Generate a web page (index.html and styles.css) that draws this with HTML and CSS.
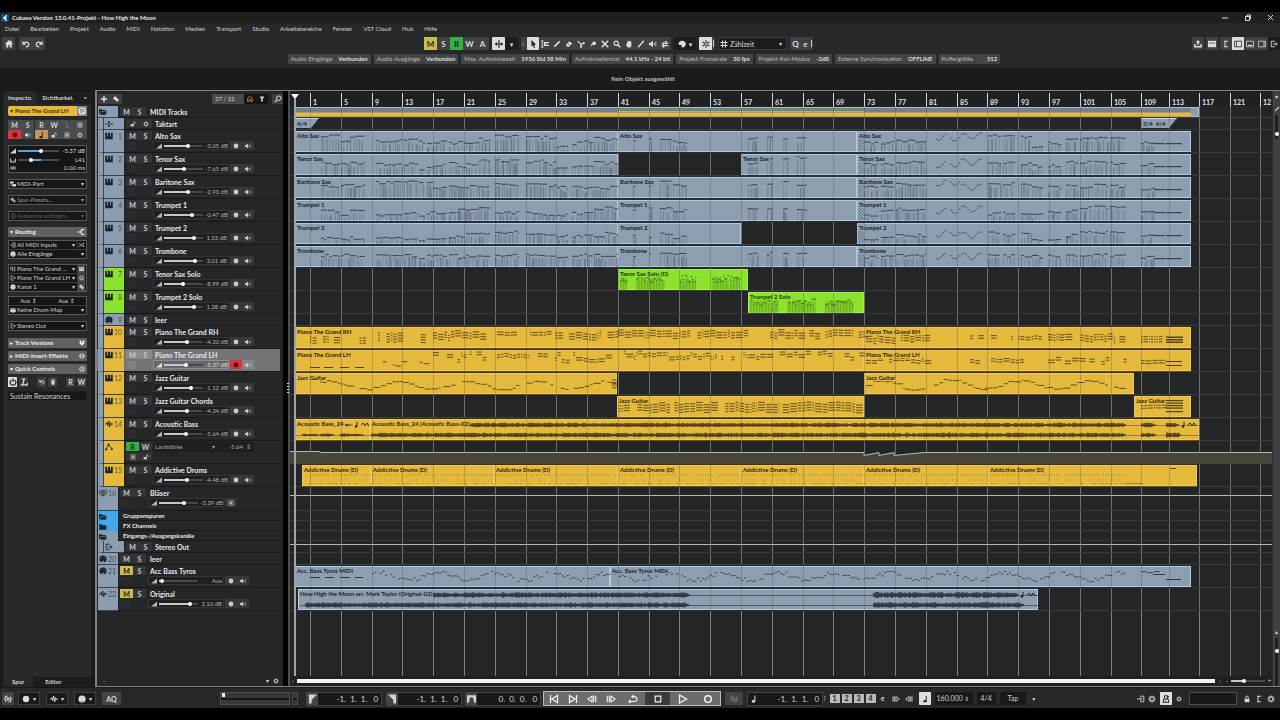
FILE: index.html
```html
<!DOCTYPE html>
<html lang="de">
<head>
<meta charset="utf-8">
<title>Cubase Version 13.0.41-Projekt - How High the Moon</title>
<link rel="stylesheet" href="styles.css">
</head>
<body>
<svg class="sprite" aria-hidden="true">
  <symbol id="i-logo" viewBox="0 0 8 8"><rect width="8" height="8" fill="#15506e"/><path d="M5.6 1.2 2.6 4l3 2.8M5.5 2.7 4.2 4l1.3 1.3" fill="none" stroke="#d8f2ff" stroke-width="1.1"/></symbol>
  <symbol id="i-home" viewBox="0 0 10 10"><path d="M5 0 0 5h1.500v4.500h2.600V6.300h1.800v3.200h2.600V5H10L8.500 3.400V1H7v1z" fill="currentColor"/></symbol>
  <symbol id="i-undo" viewBox="0 0 10 10"><path d="M2.500 4.200C5 1.500 9 3 8.400 6 8 8 6 8.600 4.600 8.400" fill="none" stroke="currentColor" stroke-width="1.600"/><path d="M.5 1v5h5z" fill="currentColor"/></symbol>
  <symbol id="i-redo" viewBox="0 0 10 10"><path d="M7.500 4.200C5 1.500 1 3 1.600 6 2 8 4 8.600 5.400 8.400" fill="none" stroke="currentColor" stroke-width="1.600"/><path d="M9.500 1v5h-5z" fill="currentColor"/></symbol>
  <symbol id="i-scroll" viewBox="0 0 10 10"><path d="M5 0v10M0 5h10" stroke="currentColor" stroke-width="1.400"/><path d="M2.500 2.500 0 5l2.500 2.500zM7.500 2.500 10 5 7.500 7.500z" fill="currentColor"/></symbol>
  <symbol id="i-arrow" viewBox="0 0 10 10"><path d="M3 0v8l2-1.500L6 10l1.500-.6L6.400 6H9z" fill="currentColor"/></symbol>
  <symbol id="i-range" viewBox="0 0 10 10"><path d="M0 1h3M1.500 1v8M0 9h3" fill="none" stroke="currentColor" stroke-width="1.200"/><path d="M3.500 2.500H10v1.500H6v2h4v1.500H3.500z" fill="currentColor"/></symbol>
  <symbol id="i-pen" viewBox="0 0 10 10"><path d="M1 9 2 6.500 7.500 1 9 2.500 3.500 8z" fill="currentColor"/></symbol>
  <symbol id="i-eraser" viewBox="0 0 10 10"><path d="M1 6 5.500 1.500 9 4.500 5 8.500H3z" fill="currentColor"/><path d="m3.300 4 3 3" stroke="#3c3d3f"/></symbol>
  <symbol id="i-scissors" viewBox="0 0 10 10"><path d="m1 1.500 4 4L9 4M5 5.500V9" stroke="currentColor" stroke-width="1.500" fill="none"/><circle cx="5" cy="8.300" r="1.400" fill="currentColor"/><circle cx="8.300" cy="4" r="1.400" fill="currentColor"/></symbol>
  <symbol id="i-glue" viewBox="0 0 10 10"><path d="M1 9 3 5l3-3.500 3 1.500-1 3-2 .5L4 6z" fill="currentColor"/></symbol>
  <symbol id="i-x" viewBox="0 0 10 10"><path d="m1 1 8 8M9 1 1 9" stroke="currentColor" stroke-width="2"/></symbol>
  <symbol id="i-lens" viewBox="0 0 10 10"><circle cx="4" cy="4" r="2.600" fill="none" stroke="currentColor" stroke-width="1.500"/><path d="m6 6 3 3" stroke="currentColor" stroke-width="2"/></symbol>
  <symbol id="i-hand" viewBox="0 0 10 10"><path d="M2 4h1V1.500h1.200V1h1.200v.5h1.200V2H8v5L7 9.500H3.500L1.500 6.500z" fill="currentColor"/></symbol>
  <symbol id="i-line" viewBox="0 0 10 10"><path d="M1.500 9 8.500 1" stroke="currentColor" stroke-width="1.700"/></symbol>
  <symbol id="i-speaker" viewBox="0 0 10 10"><path d="M0 3.500h2L5 1v8L2 6.500H0z" fill="currentColor"/><path d="M6.500 3.500v3M8.500 2.200v5.600" stroke="currentColor" stroke-width="1"/></symbol>
  <symbol id="i-warp" viewBox="0 0 10 10"><path d="M1 4h7M5 1l3 3-2 1M9 7H2M4 5 1.500 7 4 9.500" stroke="currentColor" stroke-width="1.500" fill="none"/></symbol>
  <symbol id="i-palette" viewBox="0 0 10 10"><path d="M5 .8C1.500.8 0 4 1 5.500c1 1.300 2 .2 3 .8.900.7-.2 2 1 3C8.500 9.300 10.500 6 9.500 3.500 8.500 1.600 7 .8 5 .8z" fill="currentColor"/></symbol>
  <symbol id="i-snap" viewBox="0 0 10 10"><path d="M5 0v10M.7 2.500l8.600 5M9.300 2.500l-8.600 5" stroke="currentColor" stroke-width="1.300" stroke-dasharray="3.800 2.200"/></symbol>
  <symbol id="i-grid" viewBox="0 0 10 10"><path d="M3.200.5v9M6.800.5v9M.5 3.200h9M.5 6.800h9" stroke="currentColor" stroke-width="1.300"/></symbol>
  <symbol id="i-export" viewBox="0 0 10 10"><path d="M5 0 2 3.200h2V6h2V3.200h2z" fill="currentColor"/><path d="M1 5v3.500h8V5" fill="none" stroke="currentColor" stroke-width="1.800"/></symbol>
  <symbol id="i-media" viewBox="0 0 10 10"><path d="M0 1h10v8H0z" fill="currentColor"/><path d="M2 5V3M4 5V3.500M6 5V2.500M8 5V3" stroke="#3c3d3f" stroke-width=".9"/></symbol>
  <symbol id="i-lay0" viewBox="0 0 10 10"><path d="M2.500 1.500h5M2.500 8.500h5M3.800 1v8" stroke="currentColor" stroke-width="1.300"/></symbol>
  <symbol id="i-lay1" viewBox="0 0 10 10"><path d="M.5 1.500h9v7h-9zM3 1.500v7" fill="none" stroke="currentColor"/></symbol>
  <symbol id="i-lay2" viewBox="0 0 10 10"><path d="M.5 1.500h9v7h-9z" fill="none" stroke="currentColor"/><path d="M2 6h6v1.500H2z" fill="currentColor"/></symbol>
  <symbol id="i-lay3" viewBox="0 0 10 10"><path d="M.5 1.500h9v7h-9zM7.500 2v6" fill="none" stroke="currentColor"/></symbol>
  <symbol id="i-out" viewBox="0 0 10 10"><path d="M6 1.500H1.500v7H6M3.500 5H9M7 3l2 2-2 2" fill="none" stroke="currentColor" stroke-width="1.100"/></symbol>
  <symbol id="i-in" viewBox="0 0 10 10"><path d="M4 1.500h4.500v7H4M0 5h5.500M4 3l2 2-2 2" fill="none" stroke="currentColor" stroke-width="1.200"/></symbol>
  <symbol id="i-disc" viewBox="0 0 10 10"><circle cx="5" cy="5" r="3.800" fill="none" stroke="currentColor" stroke-width="1.400"/><path d="M3 6 7 3.500M5 7h3" stroke="currentColor"/></symbol>
  <symbol id="i-note" viewBox="0 0 10 10"><path d="M6.500 1v6.500" stroke="currentColor" stroke-width="1.200"/><ellipse cx="5" cy="7.700" rx="2" ry="1.500" fill="currentColor"/></symbol>
  <symbol id="i-lock" viewBox="0 0 10 10"><path d="M1 5h5.500v4H1z" fill="currentColor"/><path d="M5.500 5V3.200C5.500 1.200 9 1.200 9 3.200V5" fill="none" stroke="currentColor" stroke-width="1.100"/></symbol>
  <symbol id="i-padlock" viewBox="0 0 10 10"><path d="M2 4.500h6V9H2z" fill="currentColor"/><path d="M3.300 4.500V3c0-2.300 3.400-2.300 3.400 0v1.500" fill="none" stroke="currentColor" stroke-width="1.200"/></symbol>
  <symbol id="i-box" viewBox="0 0 10 10"><path d="M1.500 1.500h7v7h-7z" fill="none" stroke="currentColor" stroke-width="1.100"/><path d="M3.500 3.500h3v3h-3z" fill="currentColor"/></symbol>
  <symbol id="i-wedge" viewBox="0 0 10 10"><path d="M0 9 10 1v8z" fill="currentColor"/></symbol>
  <symbol id="i-pan" viewBox="0 0 10 10"><path d="M.7 2v6.500h8.600V2M.7 4 4 8.500M9.300 4 6 8.500" fill="none" stroke="currentColor" stroke-width="1.300"/></symbol>
  <symbol id="i-delay" viewBox="0 0 12 10"><circle cx="3.500" cy="5" r="2.600" fill="none" stroke="currentColor" stroke-width="1.600"/><circle cx="8.500" cy="5" r="2.600" fill="none" stroke="currentColor" stroke-width="1.600"/></symbol>
  <symbol id="i-part" viewBox="0 0 10 10"><path d="M0 1h6v3H0zM4 5h6v4H4z" fill="currentColor"/><path d="M1.500 3v4.500H5" stroke="currentColor" fill="none"/></symbol>
  <symbol id="i-preset" viewBox="0 0 10 10"><circle cx="3.700" cy="3.700" r="3" fill="currentColor"/><circle cx="7" cy="6.700" r="2.600" fill="currentColor"/></symbol>
  <symbol id="i-route" viewBox="0 0 10 10"><path d="M1 5h4M9 2H6.500Q5 2 5 5t1.500 3H9" fill="none" stroke="currentColor" stroke-width="1.400"/></symbol>
  <symbol id="i-shuffle" viewBox="0 0 10 10"><path d="M0 2.500h2.500l4 5H10M0 7.500h2.500l4-5H10" fill="none" stroke="currentColor" stroke-width="1.300"/><path d="M8 .5v4l2-2zM8 5.500v4l2-2z" fill="currentColor"/></symbol>
  <symbol id="i-midi" viewBox="0 0 10 10"><circle cx="5" cy="5" r="4.500" fill="currentColor"/><path d="M2.300 5h.8M6.900 5h.8M3.200 3h.8M6 3h.8M3.800 9.500V7.800h2.400v1.700z" stroke="#8795a6" stroke-width=".7" fill="#8795a6"/></symbol>
  <symbol id="i-keys" viewBox="0 0 10 10"><path d="M.3 1h2.400v4.500h1V1h2.600v4.500h1V1h2.400v8H.3z" fill="currentColor"/></symbol>
  <symbol id="i-bars" viewBox="0 0 10 10"><path d="M1.500 1v6M4.500 1v8M8 1v8" stroke="currentColor" stroke-width="1.300"/></symbol>
  <symbol id="i-drum" viewBox="0 0 10 10"><path d="M1 2h8v2H1zM0 4.700h10V7l-2 2H2L0 7z" fill="currentColor"/></symbol>
  <symbol id="i-power" viewBox="0 0 10 10"><path d="M3 2.500C0 4.500 1.500 9 5 9s5-4.500 2-6.500M5 .5V5" fill="none" stroke="currentColor" stroke-width="1.500"/></symbol>
  <symbol id="i-quick" viewBox="0 0 10 10"><path d="M2.500 1.500h4M5 1.500 3.500 8.500M1 8.500h8.500V6" fill="none" stroke="currentColor" stroke-width="1.500"/></symbol>
  <symbol id="i-trash" viewBox="0 0 10 10"><path d="M1 2h8M3.500 1h3" stroke="currentColor" stroke-width="1.200"/><path d="M2 3.200h6L7.300 9.500H2.700z" fill="currentColor"/></symbol>
  <symbol id="i-shield" viewBox="0 0 10 10"><path d="M1 1h3v3h2V1h3v5L5 9.500 1 6z" fill="currentColor"/></symbol>
  <symbol id="i-insert" viewBox="0 0 10 10"><circle cx="5" cy="5" r="3.600" fill="none" stroke="currentColor" stroke-width="1.300"/><path d="M0 5h10" stroke="currentColor" stroke-width="1.300"/></symbol>
  <symbol id="i-folder" viewBox="0 0 12 10"><path d="M0 1h4l1 1h5v1.500H3L1 8H0z" fill="currentColor"/><path d="M3.300 4.300H12L10 9H1.500z" fill="currentColor"/></symbol>
  <symbol id="i-folderc" viewBox="0 0 12 10"><path d="M.5 1H4l1 1.200h6V9H.5z" fill="currentColor"/></symbol>
  <symbol id="i-sig" viewBox="0 0 12 10"><path d="M0 5h12" stroke="currentColor" stroke-width="1.300"/><path d="M4.500 1h3v2h-3zM4.500 7h3v2h-3z" fill="currentColor"/></symbol>
  <symbol id="i-wave" viewBox="0 0 12 10"><path d="M0 5h1.500L3 3l1 4.500L5.500.5 7 9.500 8.300 3l1.200 3 .8-1H12" fill="none" stroke="currentColor" stroke-width="1.400"/></symbol>
  <symbol id="i-auto" viewBox="0 0 10 10"><path d="m1.500 7.500 3-5.500L8 6.500" fill="none" stroke="currentColor"/><circle cx="1.500" cy="8" r="1.300" fill="currentColor"/><circle cx="4.500" cy="2" r="1.300" fill="currentColor"/><circle cx="8.500" cy="7.500" r="1.300" fill="currentColor"/></symbol>
  <symbol id="i-group" viewBox="0 0 10 10"><path d="M1 1v4c0 4 8 4 8 0V1M3.500 1v5M5 1v8.500M6.500 1v5" fill="none" stroke="currentColor" stroke-width="1"/></symbol>
  <symbol id="i-gear" viewBox="0 0 10 10"><circle cx="5" cy="5" r="2.600" fill="none" stroke="currentColor" stroke-width="1.400"/><path d="M5 .3v2M5 7.700v2M.3 5h2M7.700 5h2M1.700 1.700 3 3M7 7l1.300 1.300M8.300 1.700 7 3M3 7 1.700 8.300" stroke="currentColor" stroke-width="1.100"/></symbol>
  <symbol id="i-head" viewBox="0 0 10 10"><path d="M1 9V5c0-5 8-5 8 0v4H6.500V6h-3v3z" fill="none" stroke="currentColor" stroke-width="1.400"/></symbol>
  <symbol id="i-funnel" viewBox="0 0 10 10"><path d="M1 1h8L6.300 4.500V9H3.700V4.500z" fill="currentColor"/></symbol>
  <symbol id="i-search" viewBox="0 0 10 10"><circle cx="6" cy="4" r="2.800" fill="none" stroke="currentColor" stroke-width="1.200"/><path d="M4 6 1 9" stroke="currentColor" stroke-width="1.500"/></symbol>
  <symbol id="i-prev" viewBox="0 0 10 10"><path d="M1.500 1v8M8.500 1.500v7L3 5z" fill="none" stroke="currentColor" stroke-width="1.300"/></symbol>
  <symbol id="i-next" viewBox="0 0 10 10"><path d="M8.500 1v8M1.500 1.500v7L7 5z" fill="none" stroke="currentColor" stroke-width="1.300"/></symbol>
  <symbol id="i-rew" viewBox="0 0 12 10"><path d="M6 1.500v7L1 5z" fill="none" stroke="currentColor" stroke-width="1.300"/><path d="M8 1v8M10.500 1v8" stroke="currentColor" stroke-width="1.400"/></symbol>
  <symbol id="i-fwd" viewBox="0 0 12 10"><path d="M6 1.500v7L11 5z" fill="none" stroke="currentColor" stroke-width="1.300"/><path d="M4 1v8M1.500 1v8" stroke="currentColor" stroke-width="1.400"/></symbol>
  <symbol id="i-cycle" viewBox="0 0 12 10"><path d="M1 8h6.500C12 8 11.500 2 7.500 2H5M7 0 4.500 2 7 4M3 6 1 8l2 1.800" fill="none" stroke="currentColor" stroke-width="1.300"/></symbol>
  <symbol id="i-stop" viewBox="0 0 10 10"><path d="M1.500 1.500h7v7h-7z" fill="none" stroke="currentColor" stroke-width="1.500"/></symbol>
  <symbol id="i-play" viewBox="0 0 10 10"><path d="M1.500 1v8l7-4z" fill="none" stroke="currentColor" stroke-width="1.300"/></symbol>
  <symbol id="i-rec" viewBox="0 0 10 10"><circle cx="5" cy="5" r="3.300" fill="none" stroke="currentColor" stroke-width="1.500"/></symbol>
  <symbol id="i-dot" viewBox="0 0 10 10"><circle cx="5" cy="5" r="4" fill="currentColor"/></symbol>
  <symbol id="i-locl" viewBox="0 0 10 10"><path d="M1 0h9L4 6v4H1z" fill="currentColor"/></symbol>
  <symbol id="i-locr" viewBox="0 0 10 10"><path d="M9 0H0l6 6v4h3z" fill="currentColor"/></symbol>
  <symbol id="i-punch" viewBox="0 0 12 10"><path d="M0 0h12v10H9.500L8 3H4L2.500 10H0z" fill="currentColor"/></symbol>
  <symbol id="i-perf" viewBox="0 0 10 10"><circle cx="5" cy="5" r="1.800" fill="currentColor"/><circle cx="5" cy="5" r="3.800" fill="none" stroke="currentColor" stroke-width="1.500" stroke-dasharray="9 3" stroke-dashoffset="4"/></symbol>
  <symbol id="i-metro" viewBox="0 0 10 10"><path d="M3.500 1h3L8.500 9h-7zM4 6.500 8.500 1.500" fill="none" stroke="currentColor" stroke-width="1.300"/></symbol>
</svg>

<div class="app">
  <header class="titlebar">
    <svg class="ic ic8"><use href="#i-logo"/></svg>
    <h1>Cubase Version 13.0.41-Projekt - How High the Moon</h1>
    <div class="window-controls">
      <button aria-label="Minimieren"><svg class="ic"><path d="M1 4h6" stroke="#ddd" stroke-width="1"/></svg></button>
      <button aria-label="Wiederherstellen"><svg class="ic"><path d="M1.500 2.500h4v4h-4zM3 2V1h3.500v4" fill="none" stroke="#ddd" stroke-width="1"/></svg></button>
      <button aria-label="Schließen"><svg class="ic"><path d="m1 1 5 5M6 1 1 6" stroke="#ddd" stroke-width="1"/></svg></button>
    </div>
  </header>
  <nav class="menubar">
    <button>Datei</button><button>Bearbeiten</button><button>Projekt</button><button>Audio</button><button>MIDI</button><button>Notation</button><button>Medien</button><button>Transport</button><button>Studio</button><button>Arbeitsbereiche</button><button>Fenster</button><button>VST Cloud</button><button>Hub</button><button>Hilfe</button>
  </nav>
  <div class="toolbar">
    <div class="tools">
      <div class="group"><button aria-label="Hub"><svg class="ic ic8"><use href="#i-home"/></svg></button></div>
      <div class="group"><button aria-label="Rückgängig"><svg class="ic ic8"><use href="#i-undo"/></svg></button><button aria-label="Wiederholen"><svg class="ic ic8"><use href="#i-redo"/></svg></button></div>
    </div>
    <div class="tools mid">
      <div class="group state"><button class="mute">M</button><button>S</button><button class="read">R</button><button>W</button><button>A</button></div>
      <div class="group"><button class="on" aria-label="Auto-Scroll"><svg class="ic ic8"><use href="#i-scroll"/></svg></button><button class="dark" aria-label="Auto-Scroll-Optionen">▾</button></div>
      <div class="group pick">
        <span class="grip">⠆</span>
        <button class="on" aria-label="Objektauswahl"><svg class="ic"><use href="#i-arrow"/></svg></button>
        <button aria-label="Auswahlbereich"><svg class="ic"><use href="#i-range"/></svg></button>
        <button aria-label="Stift"><svg class="ic"><use href="#i-pen"/></svg></button>
        <button aria-label="Radiergummi"><svg class="ic"><use href="#i-eraser"/></svg></button>
        <button aria-label="Schere"><svg class="ic"><use href="#i-scissors"/></svg></button>
        <button aria-label="Klebetube"><svg class="ic"><use href="#i-glue"/></svg></button>
        <button aria-label="Stummschalten"><svg class="ic"><use href="#i-x"/></svg></button>
        <button aria-label="Zoom"><svg class="ic"><use href="#i-lens"/></svg></button>
        <button aria-label="Comp"><svg class="ic"><use href="#i-hand"/></svg></button>
        <button aria-label="Linie"><svg class="ic"><use href="#i-line"/></svg></button>
        <button aria-label="Wiedergabe"><svg class="ic"><use href="#i-speaker"/></svg></button>
        <button aria-label="Time Warp"><svg class="ic"><use href="#i-warp"/></svg></button>
      </div>
      <div class="group"><button class="wide dark" aria-label="Farbe"><svg class="ic"><use href="#i-palette"/></svg>▾</button></div>
      <div class="group"><button class="on" aria-label="Raster"><svg class="ic"><use href="#i-snap"/></svg></button><span class="tick"></span></div>
      <label class="picker"><svg class="ic"><use href="#i-grid"/></svg><select aria-label="Rastertyp"><option>Zählzeit</option></select></label>
      <div class="group"><button class="slim">Q</button><button class="thin" aria-label="Quantisierungsfeld">e</button><span class="tick"></span></div>
    </div>
    <div class="tools end">
      <div class="group"><button aria-label="Export"><svg class="ic"><use href="#i-export"/></svg></button></div>
      <div class="group"><button aria-label="MediaBay"><svg class="ic"><use href="#i-media"/></svg></button></div>
      <div class="group"><button aria-label="Zonen"><svg class="ic"><use href="#i-lay0"/></svg></button><button class="on" aria-label="Linke Zone"><svg class="ic"><use href="#i-lay1"/></svg></button><button aria-label="Untere Zone"><svg class="ic"><use href="#i-lay2"/></svg></button><button aria-label="Rechte Zone"><svg class="ic"><use href="#i-lay3"/></svg></button><button class="dark half" aria-label="Zonen einrichten"><svg class="ic"><use href="#i-out"/></svg></button></div>
    </div>
  </div>
  <dl class="statusline">
    <div><dt>Audio-Eingänge</dt><dd>Verbunden</dd></div>
    <div><dt>Audio-Ausgänge</dt><dd>Verbunden</dd></div>
    <div><dt>Max. Aufnahmezeit</dt><dd>1936 Std 58 Min</dd></div>
    <div><dt>Aufnahmeformat</dt><dd>44.1 kHz - 24 bit</dd></div>
    <div><dt>Projekt-Framerate</dt><dd>30 fps</dd></div>
    <div><dt>Projekt-Pan-Modus</dt><dd>-3dB</dd></div>
    <div><dt>Externe Synchronisation</dt><dd>OFFLINE</dd></div>
    <div class="buffer"><dt>Puffergröße</dt><dd>512</dd></div>
  </dl>
  <p class="infoline">Kein Objekt ausgewählt</p>

  <main class="workspace">
    <aside class="inspector">
      <div class="zone-tabs top"><button class="active">Inspecto.</button><button>Sichtbarkei.</button><button aria-label="Einstellungen">=</button></div>
      <div class="panel">
        <div class="track-title"><button class="title">▾ <span>Piano The Grand LH</span></button><button class="edit" aria-label="Kanal bearbeiten"><svg class="ic"><use href="#i-disc"/></svg></button></div>
        <div class="pads">
          <button>M</button><button>S</button><button class="gapl">R</button><button>W</button><button class="off">L</button><button aria-label="Spuren"><svg class="ic ic6"><use href="#i-box"/></svg></button>
          <button class="red" aria-label="Aufnahme aktivieren"><svg class="ic ic6"><use href="#i-dot"/></svg></button><button aria-label="Monitor"><svg class="ic ic6"><use href="#i-speaker"/></svg></button><button class="tan gapl" aria-label="Zeitbasis"><svg class="ic"><use href="#i-note"/></svg></button><button aria-label="Sperren"><svg class="ic ic6"><use href="#i-lock"/></svg></button><button aria-label="Spurversionen"><svg class="ic ic6"><use href="#i-box"/></svg></button><button aria-label="Einfrieren"><svg class="ic ic6"><use href="#i-gear"/></svg></button>
        </div>
        <div class="fields levels">
          <label><svg class="ic ic6"><use href="#i-wedge"/></svg><input class="fader blue" type="range" value="58" style="--v:58%"><output>-5.37 dB</output></label>
          <label><svg class="ic ic6"><use href="#i-pan"/></svg><input class="fader pan" type="range" value="31" style="--v:31%"><output>L41</output></label>
          <label><svg class="ic ic6"><use href="#i-delay"/></svg><output>0.00 ms</output></label>
        </div>
        <div class="fields"><label><svg class="ic ic6"><use href="#i-part"/></svg><select aria-label="Bearbeitungsmodus"><option>MIDI-Part</option></select></label></div>
        <div class="fields italic"><label><svg class="ic ic6"><use href="#i-preset"/></svg><select aria-label="Spur-Presets"><option>Spur-Presets...</option></select></label></div>
        <div class="fields italic faint"><label><svg class="ic ic6"><use href="#i-disc"/></svg><select aria-label="Aufnahme"><option>Aufnahme einfügen...</option></select></label></div>
        <button class="section">▾ <span>Routing</span><svg class="ic"><use href="#i-route"/></svg></button>
        <div class="fields tight">
          <label><svg class="ic ic6"><use href="#i-in"/></svg><select aria-label="Eingang"><option>All MIDI Inputs</option></select><svg class="ic ic6 side"><use href="#i-shuffle"/></svg></label>
          <label><svg class="ic ic6"><use href="#i-midi"/></svg><select aria-label="Eingangskanal"><option>Alle Eingänge</option></select></label>
        </div>
        <div class="fields">
          <label><svg class="ic ic6"><use href="#i-bars"/></svg><select aria-label="Instrument"><option>Piano The Grand ...</option></select><svg class="ic ic6 side lit"><use href="#i-keys"/></svg></label>
          <label><svg class="ic ic6"><use href="#i-out"/></svg><select aria-label="Ausgang"><option>Piano The Grand LH</option></select><svg class="ic ic6 side lit"><use href="#i-disc"/></svg></label>
          <label><svg class="ic ic6"><use href="#i-midi"/></svg><select aria-label="Kanal"><option>Kanal 1</option></select><svg class="ic ic6 side lit"><use href="#i-preset"/></svg></label>
        </div>
        <div class="fields close">
          <div class="offs"><span>Aus ⇕</span><span>Aus ⇕</span></div>
          <label><svg class="ic ic6"><use href="#i-drum"/></svg><select aria-label="Drum-Map"><option>Keine Drum-Map</option></select></label>
        </div>
        <div class="fields last"><label><svg class="ic ic6"><use href="#i-out"/></svg><select aria-label="Audioausgang"><option>Stereo Out</option></select></label></div>
        <button class="section">▸ <span>Track Versions</span><svg class="ic ic6"><use href="#i-shield"/></svg></button>
        <button class="section">▸ <span>MIDI-Insert-Effekte</span><svg class="ic ic6"><use href="#i-insert"/></svg></button>
        <button class="section">▾ <span>Quick Controls</span><svg class="ic ic6"><use href="#i-disc"/></svg></button>
        <div class="quick">
          <button class="on" aria-label="Aktivieren"><svg class="ic"><use href="#i-power"/></svg></button><button aria-label="Lernen"><svg class="ic"><use href="#i-quick"/></svg></button>
          <button class="gap" aria-label="Zurücksetzen"><svg class="ic ic6"><use href="#i-undo"/></svg></button><button aria-label="Entfernen"><svg class="ic ic6"><use href="#i-trash"/></svg></button>
          <button class="gap">R</button><button>W</button>
        </div>
        <p class="qc">Sustain Resonances</p>
      </div>
      <div class="zone-tabs bottom"><button class="active">Spur</button><button>Editor</button></div>
    </aside>

    <section class="project">
      <div class="tracklist">
        <div class="list-head">
          <button aria-label="Spur hinzufügen"><svg class="ic"><path d="M4 1v6M1 4h6" stroke="#ddd" stroke-width="1.500"/></svg></button><button aria-label="Preset"><svg class="ic ic6"><use href="#i-preset"/></svg></button>
          <span class="count">27 / 31</span><button class="dark amber" aria-label="Sichtbarkeit"><svg class="ic ic6"><use href="#i-head"/></svg></button><button class="dark" aria-label="Filter"><svg class="ic ic6"><use href="#i-funnel"/></svg></button><button class="find" aria-label="Suchen"><svg class="ic"><use href="#i-search"/></svg></button>
        </div>
        <div class="rows" id="rows"></div>
        <div class="list-foot"><span>-</span><button aria-label="Aufklappen">▾</button><button aria-label="Einrichten"><svg class="ic ic6"><use href="#i-gear"/></svg></button></div>
      </div>
      <div class="divider"><i class="handle"></i></div>
      <div class="arrange">
        <div class="canvas" id="canvas">
          <div class="ruler" id="ruler"></div>
          <div class="lanes" id="lanes"></div>
        </div>
        <div class="hscroll"><button aria-label="Nach links">‹</button><div class="bar"></div><button aria-label="Nach rechts">›</button><button aria-label="Verkleinern">-</button><input class="fader zoom" type="range" value="35" style="--v:35%" aria-label="Zoom horizontal"><button aria-label="Vergrößern">+</button></div>
      </div>
      <div class="vstrip"><button aria-label="Lineal">▾</button><button aria-label="Stift"><svg class="ic ic6"><use href="#i-pen"/></svg></button><div class="groove"><i></i></div><div class="track"></div><button aria-label="Auf">▴</button><div class="groove low"><i></i></div></div>
    </section>
  </main>

  <footer class="transport">
    <div class="tp-left">
      <button class="key" aria-label="Leistung"><svg class="ic"><use href="#i-perf"/></svg></button>
      <button class="well" aria-label="Aufnahmemodus"><svg class="ic"><use href="#i-dot"/></svg>▾</button>
      <button class="well" aria-label="Audioaufnahme"><svg class="ic"><use href="#i-wave"/></svg>▾</button>
      <button class="well" aria-label="MIDI-Aufnahme"><svg class="ic"><use href="#i-midi"/></svg>▾</button>
      <button class="key aq">AQ</button>
    </div>
    <div class="tp-mid">
      <div class="gauge"><i></i></div><div class="gauge mini"></div>
      <div class="locator"><svg class="ic"><use href="#i-locl"/></svg><span>-1.&nbsp; 1.&nbsp; 1.&nbsp;&nbsp; 0</span></div>
      <div class="locator"><svg class="ic"><use href="#i-locr"/></svg><span>-1.&nbsp; 1.&nbsp; 1.&nbsp;&nbsp; 0</span></div>
      <div class="locator tightl"><svg class="ic"><use href="#i-punch"/></svg><span>0.&nbsp; 0.&nbsp; 0.&nbsp;&nbsp; 0</span></div>
      <div class="deck">
        <button aria-label="Zurück"><svg class="ic ic10"><use href="#i-prev"/></svg></button><button aria-label="Vor"><svg class="ic ic10"><use href="#i-next"/></svg></button><button aria-label="Rücklauf"><svg class="ic ic10"><use href="#i-rew"/></svg></button><button aria-label="Vorlauf"><svg class="ic ic10"><use href="#i-fwd"/></svg></button><button class="big" aria-label="Cycle"><svg class="ic ic10"><use href="#i-cycle"/></svg></button><button class="big stop" aria-label="Stop"><svg class="ic"><use href="#i-stop"/></svg></button><button class="big" aria-label="Start"><svg class="ic ic10"><use href="#i-play"/></svg></button><button class="big" aria-label="Aufnahme"><svg class="ic ic10"><use href="#i-rec"/></svg></button>
      </div>
      <button class="key dim" aria-label="Synchronisation"><svg class="ic"><use href="#i-perf"/></svg></button>
      <div class="locator note"><svg class="ic"><use href="#i-note"/></svg><span>-1.&nbsp; 1.&nbsp; 1.&nbsp;&nbsp; 0</span></div>
      <div class="markers snaps"><span>⠇</span><b>1</b><b>2</b><b>3</b><b>4</b><b class="ring">e</b></div>
      <div class="markers roll"><svg class="ic"><use href="#i-fwd"/></svg><svg class="ic"><use href="#i-rew"/></svg></div>
      <button class="key lit" aria-label="Tempospur"><svg class="ic"><use href="#i-note"/></svg></button>
      <div class="readout tempo">160.000 <small>⇕</small></div>
      <div class="readout sig">4/4</div>
      <button class="readout tap">Tap</button><button class="caret" aria-label="Temporegler">▾</button>
    </div>
    <div class="tp-right">
      <div class="markers pre"><svg class="ic"><use href="#i-in"/></svg><svg class="ic"><use href="#i-gear"/></svg></div>
      <button class="key lit" aria-label="Metronom"><svg class="ic"><use href="#i-metro"/></svg></button>
      <div class="markers"><svg class="ic ic6"><use href="#i-gear"/></svg></div>
      <div class="gauge vu"></div>
      <div class="markers last"><svg class="ic"><use href="#i-padlock"/></svg><svg class="ic"><use href="#i-lay0"/></svg><svg class="ic"><use href="#i-gear"/></svg></div>
    </div>
  </footer>
</div>
<script src="app.js"></script>
</body>
</html>
```

FILE: styles.css
```css
* { box-sizing: border-box; }
body { margin: 0; background: #000; color: #d2d3d4; font: 6px/8px Lato, "Noto Sans", "DejaVu Sans", sans-serif; }
button, select, input, output { font: inherit; color: inherit; margin: 0; padding: 0; border: 0; background: none; }
button { display: flex; align-items: center; justify-content: center; }
select { appearance: none; }
h1, p, dl, dd { margin: 0; font-size: 6px; font-weight: 400; }
.sprite { position: absolute; width: 0; height: 0; }
.ic { width: 8px; height: 8px; flex: none; display: block; }
.ic6 { width: 6px; height: 6px; }
.ic10 { width: 10px; height: 10px; }
.app { height: 100vh; padding: 12px 0; display: flex; flex-direction: column; overflow: hidden; }

.titlebar { height: 11px; background: #1f1f1d; display: flex; align-items: center; gap: 3px; padding-left: 1px; }
.titlebar h1 { font-weight: 700; color: #e6e6e6; }
.window-controls { margin-left: auto; display: flex; gap: 15px; padding-right: 5px; }
.menubar { height: 11px; background: #27282a; display: flex; align-items: center; gap: 11px; padding-left: 5px; }
.toolbar { height: 19px; background: #27282a; display: flex; align-items: center; justify-content: space-between; padding: 0 0 0 2px; }
.tools { display: flex; gap: 4px; }
.tools.mid { gap: 3px; }
.tools.end { gap: 2px; }
.group { display: flex; background: #3f4042; height: 13px; border-radius: 1px; align-items: stretch; color: #dcdcdc; }
.group button { width: 13px; font-weight: 700; font-size: 8px; }
.tools.end .group button { width: 12px; }
.group .on { background: #dedede; color: #222; border-radius: 1px; }
.group .dark { background: #1c1d1f; font-size: 7px; }
.group .mute { background: #cdbf45; color: #222; }
.group .read { background: #35b13c; color: #123; }
.group .wide { width: 22px; gap: 3px; }
.group .thin { width: 9px; }
.group .slim { width: 11px; }
.pick button { width: 12px; }
.pick .grip { width: 6px; line-height: 13px; text-align: center; }
.tick { width: 1px; height: 7px; margin: 3px 1px; background: #ccc; }
.picker { display: flex; align-items: center; width: 69px; height: 13px; background: #1b1c1e; border: 1px solid #3d3e40; padding: 0 4px 0 1px; gap: 2px; color: #ddd; }
.picker select { flex: 1; font-size: 7px; }
.picker::after, .fields label:has(select)::after { content: "▾"; }
.statusline { height: 15px; background: #27282a; display: flex; justify-content: center; gap: 3px; padding: 1px 0 4px 8px; }
.statusline div { display: flex; gap: 6px; align-items: center; background: #434446; padding: 0 3px; border-radius: 1px; white-space: nowrap; }
.statusline dt { color: #b9babb; }
.statusline dd { font-weight: 700; color: #dcdcdc; }
.statusline .buffer { gap: 14px; }
.infoline { height: 22px; background: #1a1b1d; text-align: center; line-height: 22px; font-weight: 700; padding-left: 6px; color: #bfc0c1; }

.workspace { flex: 1; min-height: 0; display: flex; background: #1a1b1d; }
.inspector { width: 91px; margin: 0 2px; background: #27282a; display: flex; flex-direction: column; border: 1px solid #151617; }
.zone-tabs { display: flex; background: #1c1d1f; }
.zone-tabs button { height: 13px; padding: 0 5px; font-weight: 700; }
.zone-tabs .active { background: #27282a; }
.zone-tabs.bottom { margin-top: auto; height: 10px; }
.zone-tabs.bottom button { height: 10px; padding: 0 9px; }
.zone-tabs.bottom .active { margin-right: 3px; }
.panel { padding: 2px 5px; display: flex; flex-direction: column; }
.track-title { display: flex; height: 10px; margin-bottom: 4px; }
.track-title .title { flex: 1; background: #e4b93c; color: #3a2f10; font-weight: 700; border-radius: 2px 0 0 2px; justify-content: start; gap: 2px; padding-left: 2px; white-space: nowrap; }
.track-title .edit { width: 10px; background: #8a8b8d; color: #eee; }
.pads { display: grid; grid-template-columns: repeat(6, 1fr); grid-auto-rows: 9px; background: #4a4b4d; margin-bottom: 6px; row-gap: 1px; }
.pads button { font-weight: 700; font-size: 7px; }
.pads .gapl { border-left: 1px solid #27282a; }
.pads .off { color: #777; }
.pads .red { background: #d8343a; color: #5c0d10; }
.pads .tan { background: #c39462; color: #2a1c0c; }
.fields { border: 1px solid #56575a; background: #151617; margin-bottom: 6px; }
.fields label, .offs { height: 9px; display: flex; align-items: center; gap: 1px; padding: 0 1px; border-bottom: 1px solid #3c3d3f; }
.fields > :last-child { border-bottom: 0; height: 8px; }
.fields select { flex: 1; min-width: 0; width: 10px; white-space: nowrap; }
.fields label::after { order: 2; padding-right: 1px; }
.fields .side { order: 3; width: 8px; height: 8px; padding: 1px; border-left: 1px solid #3c3d3f; }
.fields .lit { background: #4a4b4d; }
.fields output { margin-left: auto; white-space: nowrap; }
.levels label { border: 0; gap: 2px; }
.levels .fader { width: 41px; }
.fields.italic { font-style: italic; color: #97989a; }
.fields.faint { color: #5f6062; }
.fields.tight { margin-bottom: 5px; }
.fields.close { margin: -2px 0 6px; }
.fields.last { margin-bottom: 7px; }
.offs { justify-content: space-around; }
.section { height: 10px; background: #606163; border-radius: 1px; font-weight: 700; justify-content: start; gap: 2px; padding: 0 2px; margin: 0 0 3px; color: #ececec; white-space: nowrap; }
.section .ic { margin-left: auto; }
.quick { display: flex; gap: 2px; margin: 0 0 4px; color: #ddd; }
.quick button { width: 9px; height: 10px; background: #3c3d3f; font-weight: 700; font-size: 7px; }
.quick .on { background: #dedede; color: #222; }
.quick .gap { margin-left: 7px; }
.qc { background: #17181a; height: 10px; font-size: 7px; line-height: 8px; padding-left: 1px; border: 1px solid #202123; white-space: nowrap; }

.project { flex: 1; min-width: 0; display: grid; grid-template-columns: 186px 7px minmax(0, 1fr) 8px; border: 1px solid #808184; border-width: 1px 0 1px 2px; margin-bottom: 1px; }
.tracklist { display: flex; flex-direction: column; background: #252628; min-height: 0; }
.list-head { height: 15px; display: flex; align-items: center; padding: 2px 0 1px 1px; }
.list-head button { width: 12px; height: 10px; background: #3f4042; color: #ddd; }
.list-head .count { margin-left: auto; width: 32px; height: 10px; background: #4a4b4d; padding: 1px 3px; }
.list-head .dark { background: #141516; }
.list-head .amber { color: #d8863a; }
.list-head .find { margin-left: 4px; width: 11px; }
.rows { flex: 1; overflow: hidden; }
.row { display: grid; grid-template-columns: 27px 28px 1fr; border-bottom: 1px solid #191a1b; margin-right: 3px; }
.row.root { grid-template-columns: 21px 29px 1fr; }
.row.bare { grid-template-columns: 21px 1fr; }
.row.bare .name { font-size: 6px; padding-left: 5px; }
.row.selected { background: #737475; }
.rail { border-left: 5px solid #8d9db0; display: flex; align-items: start; justify-content: space-between; padding: 2px 2px 0; color: #1a222b; background: var(--c); box-shadow: inset 1px 0 #39434e; margin-left: 1px; border-bottom: 1px solid #3a444f; margin-bottom: -1px; }
.root .rail, .bare .rail { border-left: 0; box-shadow: none; padding-left: 1px; }
.rail .num { opacity: .65; font-size: 7px; }
.ms { display: grid; grid-template-columns: 13px 13px; grid-auto-rows: 9px; padding: 1px 0 0 2px; gap: 1px 0; }
.ms button, .ms i { background: #333436; color: #c9cacb; font-weight: 700; font-size: 7px; }
.ms i { background: #2a2b2d; width: 9px; height: 8px; margin: 1px; }
.ms .on { background: #cdbf45; color: #222; }
.ms .read { background: #35b13c; color: #123; }
.selected .ms button { background: #8a8b8c; }
.selected .ms i { background: #808182; }
.name { font-weight: 700; font-size: 7px; line-height: 12px; height: 11px; color: #e8e8e8; padding-left: 3px; white-space: nowrap; }
.bare .name { line-height: 9px; height: 9px; }
.mix { display: flex; gap: 1px; height: 9px; padding-left: 1px; }
.level { display: flex; align-items: center; gap: 2px; width: 76px; background: #1e1f21; border: 1px solid #343537; padding: 0 1px 0 2px; color: #b5b6b7; white-space: nowrap; }
.level .fader { width: 39px; }
.level output { margin-left: auto; }
.arm { display: flex; background: #37383a; min-width: 12px; }
.arm button { width: 12px; color: #c8c9ca; }
.arm .red { background: #d8343a; color: #5c0d10; }
.selected .level { background: #66676a; border-color: #8b8c8d; color: #ddd; }
.selected .arm { background: #858687; }
.auto { display: flex; align-items: center; gap: 3px; height: 10px; background: #1e1f21; width: 100px; padding: 0 3px 0 1px; color: #aaabac; margin: 1px 0 0 2px; }
.auto select { width: 54px; }
.auto output { margin-left: auto; }
.list-foot { height: 10px; display: flex; align-items: center; padding: 0 4px 0 6px; gap: 4px; }
.list-foot span { margin-right: auto; }
.fader { appearance: none; height: 6px; background: linear-gradient(#c6c7c8, #c6c7c8) 0 50% / var(--v) 2px no-repeat, linear-gradient(#48494b, #48494b) 0 50% / 100% 2px no-repeat; }
.fader::-webkit-slider-thumb { appearance: none; width: 4px; height: 4px; border-radius: 50%; background: #fff; }
.fader.blue { background: linear-gradient(#58a5dc, #58a5dc) 0 50% / var(--v) 2px no-repeat, linear-gradient(#48494b, #48494b) 0 50% / 100% 2px no-repeat; }
.fader.pan { background: linear-gradient(#58a5dc, #58a5dc) 40% 50% / 30% 2px no-repeat, linear-gradient(#48494b, #48494b) 0 50% / 100% 2px no-repeat; }

.divider { background: #000; border-right: 2px solid #4d4e50; display: flex; align-items: center; justify-content: end; }
.handle { width: 2px; height: 12px; margin-right: -1px; background: repeating-linear-gradient(#ddd 0 1px, transparent 1px 3px); }
.arrange { display: flex; flex-direction: column; background: #242527; min-width: 0; }
.canvas { flex: 1; position: relative; overflow: hidden; }
.ruler { height: 15px; background: #1f2022; position: relative; }
.ruler span { position: absolute; top: 2px; height: 14px; border-left: 1px solid #d5d5d5; padding: 5px 0 0 2px; font-weight: 700; font-size: 7px; line-height: 8px; color: #e2e2e2; }
.grid-line { position: absolute; top: 15px; bottom: 0; width: 1px; background: #808183; }
.grid-line.over { background: #3d434a; opacity: .28; height: 505px; z-index: 2; }
.playhead { position: absolute; top: 3px; bottom: 0; width: 2px; background: #a2a3a4; z-index: 3; }
.playhead::before { content: ""; position: absolute; left: -3px; width: 8px; height: 4px; background: #fff; clip-path: polygon(0 0, 100% 0, 62% 100%, 38% 100%); }
.lane { position: relative; border-bottom: 1px solid #3c3d40; }
.clip { position: absolute; top: 1px; height: 21px; overflow: hidden; background: #8e9eb1; box-shadow: inset 0 0 0 1px #b7c8d6, 0 1px #22303c, 0 -1px #22303c; color: #16202c; }
.clip svg { display: block; width: 100%; height: 100%; position: absolute; inset: 0; }
.clip b { position: relative; display: inline-block; background: #8e9eb1; margin: 1px; padding: 0 1px; font-size: 6px; line-height: 7px; white-space: nowrap; }
.clip.yellow, .clip.yellow b { background: #e4b93c; color: #2c230c; }
.clip.yellow { box-shadow: inset 0 0 0 1px #efc95a, 0 1px #6b5312, 0 -1px #3b300f; }
.clip.green, .clip.green b { background: #8be32d; color: #1b340a; }
.clip.green { box-shadow: inset 0 0 0 1px #a6f04e; }
.overview { position: absolute; top: 1px; height: 10px; background: linear-gradient(#a9bac9 1px, #718192 1px 5px, #e0ba4c 6px 9px, #bfa04b 9px); }
.overview.tail { background: #8e9eb1; border: 1px solid #a9bac9; border-width: 1px 1px 1px 0; }
.overview.solo { top: 5px; height: 1px; background: #8bd23a; }
.flag { position: absolute; top: 0; height: 10px; background: #8e9eb1; border-top: 1px solid #c3d2de; clip-path: polygon(0 0, 100% 0, calc(100% - 8px) 100%, 0 100%); color: #16202c; font-weight: 700; line-height: 9px; padding-left: 2px; white-space: nowrap; }
.curve { display: block; width: 100%; height: 23px; }
.level-line { position: absolute; left: 0; right: 0; height: 1px; background: #b4b5b6; }
.hscroll { height: 10px; display: flex; align-items: center; background: #1f2022; gap: 2px; }
.hscroll .bar { flex: 1; height: 4px; background: #f4f4f4; }
.hscroll button { width: 5px; }
.zoom { width: 34px; }
.vstrip { background: #3f4043; border-left: 1px solid #2b2c2e; display: flex; flex-direction: column; align-items: center; }
.vstrip button { height: 12px; width: 7px; }
.groove { width: 3px; height: 24px; background: #1f2022; position: relative; }
.groove i { position: absolute; left: 0; bottom: 3px; width: 4px; height: 4px; border-radius: 50%; background: #fff; }
.groove.low { height: 48px; }
.groove.low i { bottom: 33px; }
.vstrip .track { flex: 1; }

.transport { height: 20px; background: #27282a; display: flex; align-items: center; justify-content: space-between; padding: 1px 5px 0 2px; }
.tp-left, .tp-mid, .tp-right { display: flex; align-items: center; gap: 4px; }
.transport .key { width: 12px; height: 13px; background: #434446; color: #ddd; border-radius: 1px; }
.transport .aq { width: 19px; font-size: 7px; font-weight: 700; }
.transport .well { width: 22px; height: 13px; background: #18191a; border: 1px solid #3c3d3f; gap: 3px; color: #ddd; margin-right: 2px; }
.transport .dim { width: 18px; color: #77787a; margin: 0; }
.transport .lit { background: #dedede; color: #222; }
.gauge { width: 70px; height: 13px; background: linear-gradient(#37383a 5px, #17181a 5px 7px, #37383a 7px); border: 1px solid #4c4d4f; padding: 0 1px; }
.gauge i { display: block; width: 3px; height: 4px; background: #eee; }
.gauge.mini { width: 6px; margin: 0 4px 0 -2px; }
.gauge.vu { width: 48px; background: #17181a; margin-left: 3px; }
.locator { display: flex; align-items: center; width: 76px; height: 14px; background: #17181a; border: 1px solid #434446; }
.locator .ic { width: 11px; height: 12px; padding: 1px; background: #434446; }
.locator span { margin-left: auto; padding-right: 3px; font-size: 8px; }
.tightl { margin-left: -1px; margin-right: -2px; }
.deck { display: flex; height: 15px; background: #6a6b6d; border: 1px solid #b9babb; color: #f2f2f2; }
.deck button { width: 19px; }
.deck .big { width: 25px; }
.deck .stop { background: #3a3b3d; }
.locator.note .ic { background: none; }
.markers { display: flex; align-items: center; gap: 2px; }
.markers.pre { gap: 3px; }
.markers.last { gap: 4px; margin-left: 2px; }
.markers b { width: 10px; height: 9px; background: #b9babb; color: #222; text-align: center; line-height: 9px; font-size: 7px; }
.markers .ring { background: none; color: #ddd; }
.markers.snaps { margin-left: -4px; }
.roll { gap: 5px; margin-right: 2px; }
.readout { height: 13px; background: #18191a; font-size: 7px; line-height: 13px; padding: 0 4px; white-space: nowrap; }
.tempo { width: 38px; padding: 0 2px; }
.tap { width: 26px; }
.caret { width: 8px; }
```

FILE: app.js
```js
const ORIGIN = 290, BAR = 30.79;
const BLUE = '#8d9db0', YELLOW = '#e4b93c', GREEN = '#8ce32e', SKY = '#3fa9ee';
const el = (html) => { const t = document.createElement('template'); t.innerHTML = html.trim(); return t.content.firstChild; };
const icon = (id, c = '') => `<svg class="ic ${c}"><use href="#i-${id}"/></svg>`;

let seed = 7;
const rnd = () => (seed = (seed * 16807) % 2147483647) / 2147483647;

/* phrases: start and end of each played passage on the time axis */
const A = [[321,339],[341,349],[350,364],[376,402],[404,417],[419,424],[427,432],[433,446],[449,457],[458,465],[466,478],[479,489],[495,518],[526,547],[549,556],[557,567],[572,582],[584,592],[594,604],[605,617]];
const B = [[633,635],[649,651],[660,672],[673,686],[748,757],[767,772],[783,788],[797,806]];
const C = [[864,877],[881,893],[896,925],[936,947],[950,960],[961,983],[988,1000],[1003,1014],[1021,1031],[1032,1042],[1048,1060],[1066,1077],[1080,1092],[1094,1107],[1110,1125],[1141,1154]];

const band = {
  alto: [4,11,5,9,8,10,13,11,12,11,11,8,5,6,8,15,12,10,6,8, 9,8,7,11,6,6,7,7, 12,11,9,5,6,4,5,5,6,15,12,7,7,7,6,11],
  tenor: [9,9,9,10,10,14,12,11,9,13,10,7,6,7,9,13,11,11,8,9, 9,9,8,9,9,5,3,3, 10,10,8,10,9,7,8,8,9,12,11,8,8,8,9,10],
  bari: [9,7,8,5,4,5,6,10,9,10,9,9,7,6,8,10,10,11,10,10, 9,8,4,8,8,6,5,9, 10,10,7,5,4,9,7,6,7,9,10,9,9,8,9,11],
  tpt1: [11,16,10,14,13,16,13,12,11,9,9,8,12,13,14,15,13,11,8,7, 9,8,8,10,7,7,9,9, 15,11,9,10,9,8,13,13,14,14,12,10,7,7,6,11],
  tpt2: [15,15,15,14,15,16,17,15,13,13,11,10,9,10,12,13,13,12,12,10, 12,13,10,14,9,9,9,9, 15,13,12,10,9,11,10,11,11,16,16,12,9,9,9,13],
  tromb: [9,9,9,9,9,12,10,9,9,11,9,9,9,9,10,10,10,9,9,9, 9,8,6,8,8,7,8,8, 11,9,9,9,9,9,9,9,9,10,9,9,9,9,9,11],
};

const rect = (x, y, w, h, o = 1) => `<rect x="${x.toFixed(1)}" y="${y.toFixed(1)}" width="${w.toFixed(1)}" height="${h}" opacity="${o}"/>`;

function melody(ys) {
  let s = '';
  [...A, ...B, ...C].forEach(([a, b], i) => {
    const y = ys[i];
    const dotted = a >= 933 && a < 984;
    if (!dotted) for (let x = a; x < b; x += 1.3 + rnd() * 2.8) s += rect(x, y + 1 + rnd() * 4, .8 + rnd(), 20, (.1 + rnd() * .22).toFixed(2));
    for (let x = a; x < b;) {
      const w = dotted ? 1.4 : 2 + rnd() * 6;
      const dy = dotted ? Math.sin(x / 2.7) * 3 + rnd() : (rnd() - .5) * 3;
      s += rect(x, y + dy, Math.min(w, b - x + 1), 1.1, .65);
      x += w + (dotted ? .8 : .5);
    }
  });
  return s + rect(1154, 12, 11, 1.2, .7) + rect(1166, 12, 16, 1.2, .7);
}

function chords(a, b, y, rows, walk = 2, gap = .25) {
  let s = '';
  for (let x = a; x < b;) {
    const w = 2 + rnd() * 6, dy = (rnd() - .5) * walk;
    if (rnd() > gap) for (let r = 0; r < rows; r++) s += rect(x, y + dy + r * 2.6, w - 1, 1.1, .65);
    x += w;
  }
  return s;
}

function line(a, b, y, amp) {
  let s = '', v = y;
  for (let x = a; x < b;) {
    const w = 2 + rnd() * 6;
    v = Math.max(3, Math.min(18, y + Math.sin(x / 11) * amp + (rnd() - .5) * 2));
    if (rnd() > .12) s += rect(x, v, w - .6, 1, .7);
    x += w;
  }
  return s;
}

function bassDots(a, b) {
  let s = '';
  for (let x = a; x < b; x += 2.6) if (rnd() > .1) s += rect(x, 10 + Math.sin(x / 9) * 3.5 + (rnd() - .5) * 4, 1.9, 1, .75);
  return s;
}

function dense(a, b) {
  let s = '';
  for (let x = a; x < b; x += 1.5) if (Math.sin(x / 6) > -.75) {
    s += rect(x, 7 + rnd() * 5, .9, 20, .32);
    s += rect(x, 6 + rnd() * 7, 1.6, 1, .6);
  }
  return s;
}

function drums() {
  let s = '';
  for (let x = 310; x < 1125; x += 2.6) {
    if (rnd() > .15) s += rect(x, 9.5, 1, 1, .45);
    if (rnd() > .6) s += rect(x, 14.5, .8, 1, .3);
    if (rnd() > .6) s += rect(x, 18, 1, 1, .45);
  }
  return s + rect(1125, 18, 18, 1, .35) + rect(1170, 3, 6, 1, .8);
}

function wave(y, a, b, amp) {
  let up = '', dn = '';
  for (let x = a; x <= b; x += 1.2) {
    const h = amp * (.45 + rnd() * .55) * Math.min(1, (b - x) / 6 + .2);
    up += `L${x.toFixed(1)} ${(y - h).toFixed(1)}`;
    dn = `L${x.toFixed(1)} ${(y + h).toFixed(1)}` + dn;
  }
  return `<path d="M${a} ${y}${up}${dn}Z" opacity=".72"/>`;
}
const glyphs = (x) => `<path d="M${x + 4} 3v4M${x + 8} 6l2-2 2 3 2-3 2 3" fill="none" stroke="currentColor"/><circle cx="${x + 3}" cy="7.500" r="1.200"/>`;

const art = {};
for (const k in band) art[k] = melody(band[k]);
art.tss = dense(620, 672) + dense(680, 696) + dense(705, 728) + dense(730, 744);
art.t2s = dense(750, 862);
art.rh = chords(310, 340, 10, 3) + chords(342, 364, 10, 3) + chords(378, 402, 6, 4) + chords(408, 425, 8, 4) + chords(433, 487, 5, 3, 6) + chords(497, 549, 5, 2) + chords(555, 618, 5, 3, 5) + chords(618, 864, 4, 3, 4, .12)
  + chords(866, 925, 9, 3, 4, .05) + chords(970, 982, 9, 2) + chords(991, 1042, 9, 2) + chords(1048, 1126, 8, 3, 4) + chords(1141, 1163, 9, 3, 1, 0) + [9.5, 12, 14.5].map((y) => rect(1166, y, 17, 1.5, .75)).join('');
art.lh = rect(310, 17, 10, 1, .8) + rect(324, 17, 9, 1, .8) + rect(340, 17, 9, 1, .8) + rect(355, 17, 9, 1, .8) + chords(375, 425, 13, 1, 6, .4) + chords(433, 487, 5, 2, 8) + chords(497, 549, 4, 2) + chords(555, 618, 6, 2, 8) + chords(618, 864, 4, 2, 7, .12)
  + chords(866, 925, 9, 2, 4, .05) + chords(970, 982, 10, 2) + chords(991, 1042, 9, 2) + chords(1048, 1126, 9, 2, 5) + chords(1141, 1165, 10, 2, 1, 0) + rect(1166, 11, 16, 1, .8) + rect(1166, 15, 16, 1, .8);
art.jg = line(320, 617, 12, 4) + line(866, 925, 12, 5) + line(934, 983, 11, 5) + line(985, 1125, 11, 4) + chords(604, 616, 6, 4);
art.jgc = chords(619, 864, 7, 4, 3, .04) + chords(1141, 1165, 9, 2, 1, 0) + [4,6.5,9,11.5,15].map((y) => rect(1166, y, 17, 1.2, .8)).join('');
art.ab = rect(295, 16, 904, 1, .4) + wave(6, 343, 353, 1.5) + glyphs(353) + wave(16, 302, 320, 1.3) + wave(16, 320, 335, 1.8) + wave(16, 340, 364, 1.8)
  + rect(466, 6, 733, 1, .4) + wave(6, 466, 1127, 2.4) + wave(16, 371, 1127, 2.4) + wave(6, 1141, 1157, 2.4) + wave(16, 1141, 1157, 2.4) + wave(6, 1166, 1180, 2.8) + wave(16, 1166, 1182, 2.8) + glyphs(1180);
art.ad = drums();
art.acc = rect(310, 11, 10, 1, .8) + rect(325, 11, 9, 1, .8) + rect(340, 11, 10, 1, .8) + rect(355, 11, 8, 1, .8) + bassDots(372, 1126) + line(1141, 1155, 6, 1) + rect(1153, 8, 12, 1, .8) + rect(1166, 13, 15, 1, .8);
art.orig = rect(300, 6, 738, 1, .55) + rect(300, 16, 738, 1, .55) + wave(6, 433, 690, 2.8) + wave(16, 305, 690, 2.8) + wave(6, 873, 1019, 3.2) + wave(16, 873, 1025, 3) + glyphs(1019);

const full = (n) => [[295, 618, n], [618, 857, n], [857, 1191, n, 1]];
const tracks = [
  { h: 12, root: 1, icon: 'folder', name: 'MIDI Tracks', kind: 'overview' },
  { h: 12, icon: 'sig', name: 'Taktart', kind: 'sig' },
  { n: 1, name: 'Alto Sax', db: '-3.05 dB', v: 64, art: 'alto', clips: full('Alto Sax') },
  { n: 2, name: 'Tenor Sax', db: '-7.65 dB', v: 51, art: 'tenor', clips: [[295, 618, 'Tenor Sax'], [741, 857, 'Tenor Sax'], [857, 1191, 'Tenor Sax', 1]] },
  { n: 3, name: 'Baritone Sax', db: '-2.93 dB', v: 64, art: 'bari', clips: full('Baritone Sax') },
  { n: 4, name: 'Trumpet 1', db: '-0.47 dB', v: 73, art: 'tpt1', clips: full('Trumpet 1') },
  { n: 5, name: 'Trumpet 2', db: '1.53 dB', v: 79, art: 'tpt2', clips: [[295, 618, 'Trumpet 2'], [618, 741, 'Trumpet 2'], [857, 1191, 'Trumpet 2', 1]] },
  { n: 6, name: 'Trombone', db: '3.01 dB', v: 83, art: 'tromb', clips: full('Trombone') },
  { n: 7, c: GREEN, name: 'Tenor Sax Solo', db: '-8.99 dB', v: 48, art: 'tss', clips: [[618, 748, 'Tenor Sax Solo (D)']] },
  { n: 8, c: GREEN, name: 'Trumpet 2 Solo', db: '1.38 dB', v: 79, art: 't2s', clips: [[748, 864, 'Trumpet 2 Solo']] },
  { n: 9, h: 12, icon: 'midi', name: 'leer' },
  { n: 10, c: YELLOW, name: 'Piano The Grand RH', db: '-4.20 dB', v: 60, art: 'rh', clips: [[295, 864, 'Piano The Grand RH'], [864, 1191, 'Piano The Grand RH']] },
  { n: 11, c: YELLOW, name: 'Piano The Grand LH', db: '-5.37 dB', v: 57, art: 'lh', selected: 1, clips: [[295, 864, 'Piano The Grand LH'], [864, 1191, 'Piano The Grand LH']] },
  { n: 12, c: YELLOW, name: 'Jazz Guitar', db: '-1.12 dB', v: 71, art: 'jg', clips: [[295, 617, 'Jazz Guitar'], [864, 1134, 'Jazz Guitar']] },
  { n: 13, c: YELLOW, name: 'Jazz Guitar Chords', db: '-4.34 dB', v: 60, art: 'jgc', clips: [[617, 864, 'Jazz Guitar'], [1134, 1191, 'Jazz Guitar']] },
  { n: 14, c: YELLOW, icon: 'wave', name: 'Acoustic Bass', db: '-5.64 dB', v: 57, art: 'ab', clips: [[295, 370, 'Acoustic Bass_24'], [370, 1199, 'Acoustic Bass_24 (Acoustic Bass-02)']] },
  { c: YELLOW, icon: 'auto', kind: 'auto' },
  { n: 15, c: YELLOW, name: 'Addictive Drums', db: '-4.48 dB', v: 60, art: 'ad', clips: [302, 371, 494, 618, 741, 864, 988, 1197].map((x, i, a) => [x, a[i + 1], 'Addictive Drums (D)']).slice(0, 7) },
  { n: 16, h: 24, root: 1, icon: 'group', name: 'Bläser', db: '-3.29 dB', v: 65, kind: 'group', line: 8 },
  { h: 10, bare: 1, c: SKY, icon: 'folder', name: 'Gruppenspuren' },
  { h: 10, bare: 1, c: SKY, icon: 'folderc', name: 'FX Channels' },
  { h: 10, bare: 1, icon: 'folder', name: 'Eingangs-/Ausgangskanäle' },
  { h: 12, icon: 'out', name: 'Stereo Out', line: 3 },
  { n: 20, h: 12, root: 1, icon: 'midi', name: 'leer' },
  { n: 21, root: 1, muted: 1, icon: 'midi', name: 'Acc Bass Tyros', db: 'Aus', v: 3, art: 'acc', clips: [[295, 610, 'Acc. Bass Tyros MIDI'], [610, 1191, 'Acc. Bass Tyros MIDI']] },
  { n: 22, root: 1, muted: 1, icon: 'wave', name: 'Original', db: '2.10 dB', v: 82, art: 'orig', clips: [[298, 1038, 'How High the Moon arr. Mark Taylor (Original-02)']] },
];

const rows = document.getElementById('rows'), lanes = document.getElementById('lanes');

function trackRow(t, h) {
  const rail = `<div class="rail">${icon(t.icon || 'keys')}<span class="num">${t.n || ''}</span></div>`;
  const tall = h > 20;
  let ms = `<div class="ms"><button class="${t.muted ? 'on' : ''}">M</button><button>S</button>${tall ? '<i></i>' : ''}</div>`;
  let body = `<div class="name">${t.name}</div>`;
  if (t.kind === 'sig') ms = `<div class="ms"><button aria-label="Sperren">${icon('lock', 'ic6')}</button><button aria-label="Optionen">${icon('gear', 'ic6')}</button></div>`;
  if (t.kind === 'auto') {
    ms = `<div class="ms"><button class="read">R</button><button>W</button><button aria-label="Modus">${icon('box', 'ic6')}</button><button aria-label="Sperren">${icon('lock', 'ic6')}</button></div>`;
    body = '<div class="auto"><select aria-label="Parameter"><option>Lautstärke</option></select><span>▾</span><output>-5.64</output><span>⇕</span></div>';
  } else if (tall) {
    const arm = t.kind === 'group' ? `<button aria-label="Kanal">${icon('box', 'ic6')}</button>`
      : `<button class="${t.selected ? 'red' : ''}" aria-label="Aufnahme">${icon('dot', 'ic6')}</button><button aria-label="Monitor">${icon('speaker', 'ic6')}</button>`;
    body += `<div class="mix"><label class="level">${icon('wedge', 'ic6')}<input class="fader" type="range" aria-label="Pegel ${t.name}" value="${t.v}" style="--v:${t.v}%"><output>${t.db}</output></label><div class="arm">${arm}</div></div>`;
  }
  const cls = ['row', t.root && 'root', t.bare && 'bare', t.selected && 'selected'].filter(Boolean).join(' ');
  return el(`<div class="${cls}" style="height:${h}px;--c:${t.c || BLUE}">${rail}${t.bare ? '' : ms}<div>${body}</div></div>`);
}

function clipHtml(t, [a, b, label, hatch]) {
  const tone = t.c === YELLOW ? 'yellow' : t.c === GREEN ? 'green' : '';
  let extra = '';
  if (hatch) for (let y = -6; y < 21; y += 3) extra += `<path d="M${a} ${y}l7 7" stroke="currentColor" stroke-width=".6" opacity=".5"/>`;
  return `<div class="clip ${tone}" style="left:${a - ORIGIN}px;width:${b - a}px"><svg viewBox="${a} 0 ${b - a} 21" fill="currentColor">${t.art ? art[t.art] : ''}${extra}</svg><b>${label}</b></div>`;
}

for (const t of tracks) {
  const h = t.h || 23;
  rows.append(trackRow(t, h));
  let inner = (t.clips || []).map((c) => clipHtml(t, c)).join('');
  if (t.kind === 'overview') inner = '<div class="overview" style="left:5px;width:896px"></div><div class="overview tail" style="left:901px;width:8px"></div><div class="overview solo" style="left:328px;width:246px"></div>';
  if (t.kind === 'sig') inner = '<div class="flag" style="left:5px;width:24px">4/4</div><div class="flag" style="left:851px;width:36px">3/4&nbsp; 4/4</div>';
  if (t.kind === 'auto') inner = '<svg class="curve"><path d="M0 10h30v1h544v3l15-3v3l15-3v3l30-3h400v12H0z" fill="#48453d"/><path d="M0 10.500h30v1h544v3l15-3v3l15-3v3l30-3h400" fill="none" stroke="#bdb8a6"/></svg>';
  if (t.line) inner = `<div class="level-line" style="top:${t.line}px"></div>`;
  lanes.append(el(`<div class="lane" style="height:${h}px">${inner}</div>`));
}

/* the 3/4 bars after 109 shorten the axis from there on */
const ruler = document.getElementById('ruler'), canvas = document.getElementById('canvas');
for (let bar = 1, i = 0; bar <= 125; bar += 4, i++) {
  const x = Math.round(20 + i * BAR - (bar > 109 ? 3 : 0) - (bar > 113 ? 1 : 0));
  ruler.append(el(`<span style="left:${x}px">${bar === 125 ? '12' : bar}</span>`));
  canvas.prepend(el(`<div class="grid-line" style="left:${x}px"></div>`));
  canvas.append(el(`<div class="grid-line over" style="left:${x}px"></div>`));
}
canvas.append(el('<div class="playhead" style="left:4px"></div>'));
```
